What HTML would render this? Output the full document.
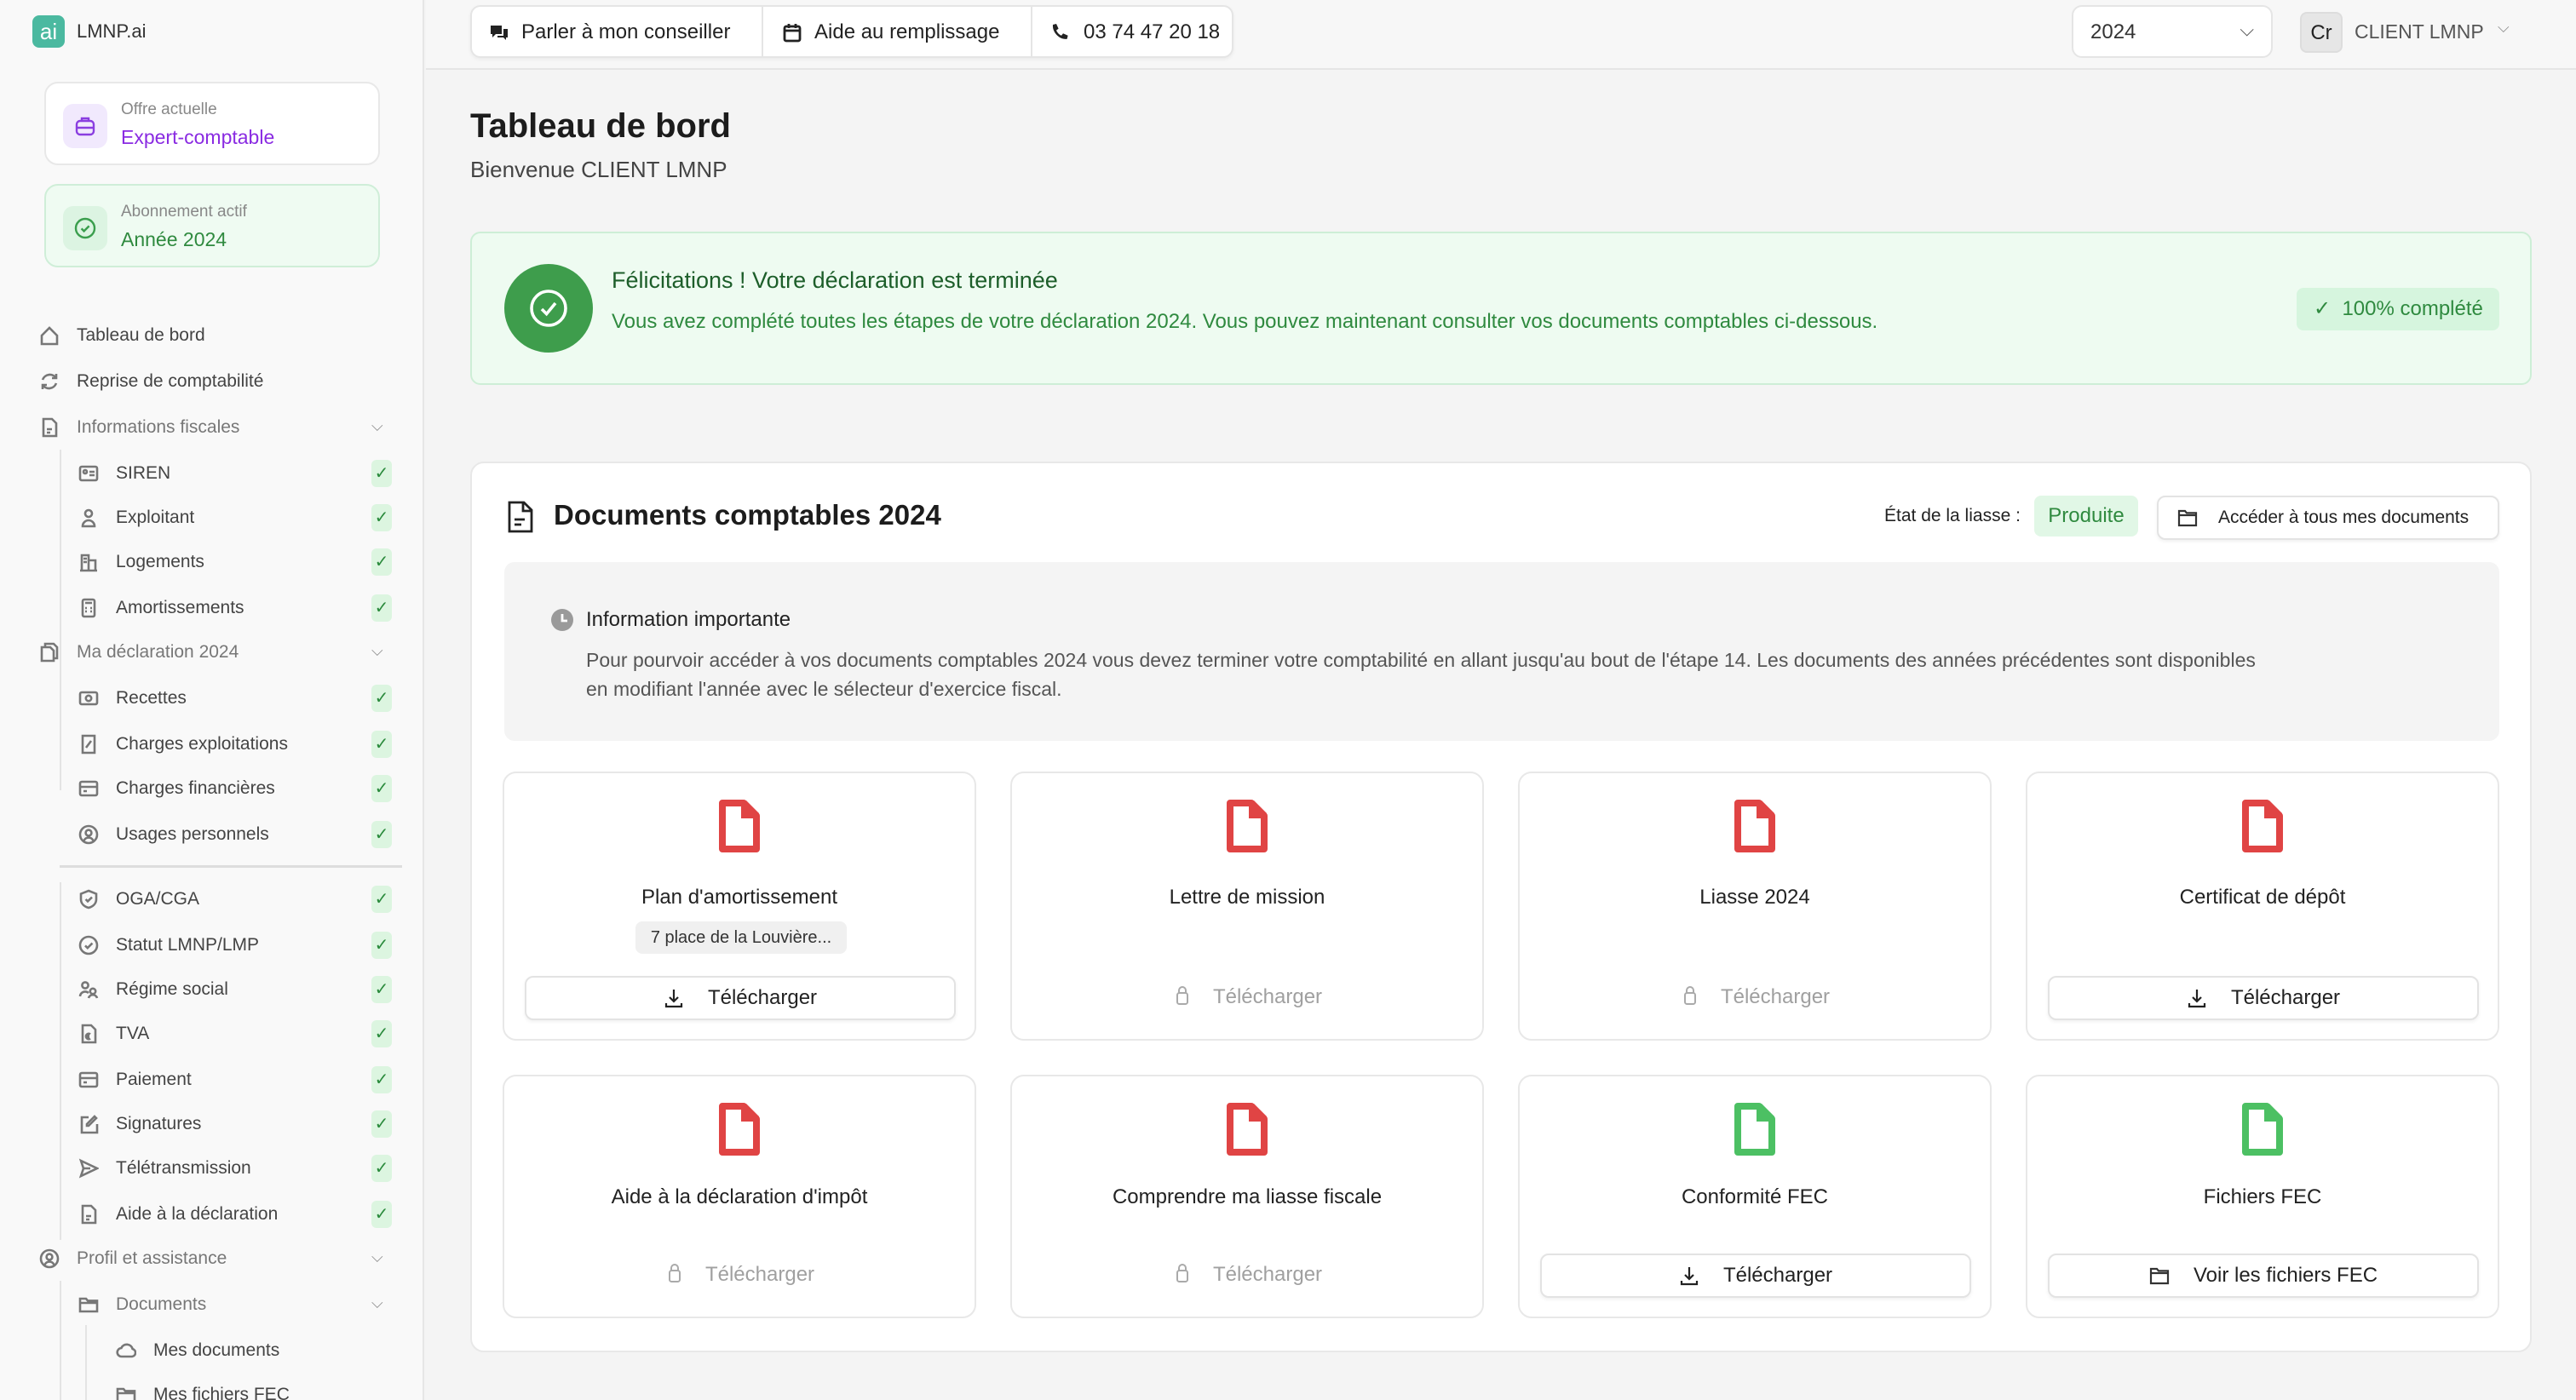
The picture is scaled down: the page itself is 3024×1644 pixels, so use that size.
<!DOCTYPE html>
<html><head><meta charset="utf-8"><style>
*{box-sizing:border-box;margin:0;padding:0}
html,body{width:3024px;height:1644px;overflow:hidden;background:#f4f4f4}
#w{zoom:2;width:1512px;height:822px;position:relative;font-family:"Liberation Sans",sans-serif;color:#222;overflow:hidden;background:#f4f4f4}
.a{position:absolute}
#sb{left:0;top:0;width:249px;height:822px;background:#f9f9f9;border-right:1px solid #e6e6e6}
.it{position:absolute;font-size:10.5px;color:#444;display:flex;align-items:center;height:20px;white-space:nowrap}
.it svg{width:12px;height:12px;margin-right:10px;stroke:#777;fill:none;stroke-width:1.3}
.ck{position:absolute;left:218px;width:12px;height:16px;background:#dcf5e0;border-radius:3px;color:#2a8a3c;font-size:10px;text-align:center;line-height:16px}
.chev{position:absolute;left:218px;font-size:9px;color:#888}
.card{position:absolute;background:#fff;border:1px solid #e8e8e8;border-radius:8px}
.btn{position:absolute;background:#fff;border:1px solid #e3e3e3;border-radius:5px;box-shadow:0 1px 2px rgba(0,0,0,.06);display:flex;align-items:center;justify-content:center;font-size:12px;color:#222;white-space:nowrap}
.dc{position:absolute;width:278px;background:#fff;border:1px solid #e8e8e8;border-radius:8px}
.dc .ic{position:absolute;left:50%;margin-left:-14px}
.dc .t{position:absolute;left:0;right:0;text-align:center;font-size:12px;color:#222}
.lk{position:absolute;left:0;right:0;text-align:center;font-size:12px;color:#a0a0a0}
</style></head><body><div id="w">
<div class="a" id="sb">
 <div class="a" style="left:19px;top:9px;width:19px;height:19px;background:#4bb9a0;border-radius:4px;color:#fff;font-size:13px;text-align:center;line-height:19px">ai</div>
 <div class="a" style="left:45px;top:12px;font-size:11px;color:#333">LMNP.ai</div>
 <div class="card" style="left:26px;top:48px;width:197px;height:49px">
  <div class="a" style="left:10px;top:12px;width:26px;height:26px;background:#f1e9fd;border-radius:6px"></div>
  <svg class="a" style="left:16px;top:18px" width="14" height="14" viewBox="0 0 14 14" fill="none" stroke="#8a3ee0" stroke-width="1.2"><rect x="2" y="4" width="10" height="8" rx="2"/><path d="M5 4V2.5h4V4M2 8h10"/></svg>
  <div class="a" style="left:44px;top:10px;font-size:9.5px;color:#888">Offre actuelle</div>
  <div class="a" style="left:44px;top:25px;font-size:11.5px;color:#8a2be2">Expert-comptable</div>
 </div>
 <div class="card" style="left:26px;top:108px;width:197px;height:49px;background:#effbf2;border-color:#cfeed8">
  <div class="a" style="left:10px;top:12px;width:26px;height:26px;background:#dcf4e2;border-radius:6px"></div>
  <svg class="a" style="left:16px;top:18px" width="14" height="14" viewBox="0 0 14 14" fill="none" stroke="#3a9e4d" stroke-width="1.2"><circle cx="7" cy="7" r="5.5"/><path d="M4.8 7.2l1.5 1.5 3-3"/></svg>
  <div class="a" style="left:44px;top:10px;font-size:9.5px;color:#888">Abonnement actif</div>
  <div class="a" style="left:44px;top:25px;font-size:11.5px;color:#2f8a3f">Année 2024</div>
 </div>
 <div class="a" style="left:35px;top:264px;width:1px;height:200px;background:#e4e4e4"></div>
 <div class="a" style="left:35px;top:518px;width:1px;height:210px;background:#e4e4e4"></div>
 <div class="a" style="left:35px;top:752px;width:1px;height:80px;background:#e4e4e4"></div>
 <div class="a" style="left:50px;top:778px;width:1px;height:60px;background:#e4e4e4"></div>
 <div class="a" style="left:35px;top:508px;width:201px;height:1.5px;background:#ddd"></div>

 <div class="it" style="left:23px;top:187px"><svg viewBox="0 0 12 12"><path d="M1.5 6L6 1.5 10.5 6V11h-9z"/></svg>Tableau de bord</div>
 <div class="it" style="left:23px;top:214px"><svg viewBox="0 0 12 12"><path d="M10 4A4.5 4.5 0 0 0 2 5M2 8a4.5 4.5 0 0 0 8-1M10 1.5V4H7.5M2 10.5V8h2.5"/></svg>Reprise de comptabilité</div>
 <div class="it" style="left:23px;top:241px;color:#777"><svg viewBox="0 0 12 12"><path d="M2.5 1h5l2.5 2.5V11h-7.5zM4.5 7h3M4.5 9h2"/></svg>Informations fiscales</div><div class="chev" style="top:245px">⌵</div>
 <div class="it" style="left:46px;top:268px"><svg viewBox="0 0 12 12"><rect x="1" y="2" width="10" height="8" rx="1"/><path d="M6.5 5h3M6.5 7h3"/><circle cx="4" cy="5" r="1"/></svg>SIREN</div><div class="ck" style="top:270px">✓</div>
 <div class="it" style="left:46px;top:294px"><svg viewBox="0 0 12 12"><circle cx="6" cy="3.5" r="2"/><path d="M2.5 11a3.5 3.5 0 0 1 7 0z"/></svg>Exploitant</div><div class="ck" style="top:296px">✓</div>
 <div class="it" style="left:46px;top:320px"><svg viewBox="0 0 12 12"><path d="M1 11h10M2 11V2h4v9M6 5h4v6M3 4h2M3 6h2"/></svg>Logements</div><div class="ck" style="top:322px">✓</div>
 <div class="it" style="left:46px;top:347px"><svg viewBox="0 0 12 12"><rect x="2.5" y="1" width="7" height="10" rx="1"/><path d="M4 3h4M4 6h1M7 6h1M4 8h1M7 8h1"/></svg>Amortissements</div><div class="ck" style="top:349px">✓</div>
 <div class="it" style="left:23px;top:373px;color:#777"><svg viewBox="0 0 12 12"><path d="M3.5 3V1h5l2 2v6.5h-2M1.5 3h5l2 2v6h-7z"/></svg>Ma déclaration 2024</div><div class="chev" style="top:377px">⌵</div>
 <div class="it" style="left:46px;top:400px"><svg viewBox="0 0 12 12"><rect x="1" y="2.5" width="10" height="7" rx="1"/><circle cx="6" cy="6" r="1.6"/></svg>Recettes</div><div class="ck" style="top:402px">✓</div>
 <div class="it" style="left:46px;top:427px"><svg viewBox="0 0 12 12"><path d="M2.5 1h7v10h-7zM4.5 8l3-4"/></svg>Charges exploitations</div><div class="ck" style="top:429px">✓</div>
 <div class="it" style="left:46px;top:453px"><svg viewBox="0 0 12 12"><rect x="1" y="2" width="10" height="8" rx="1"/><path d="M1 5h10M3 7.5h2"/></svg>Charges financières</div><div class="ck" style="top:455px">✓</div>
 <div class="it" style="left:46px;top:480px"><svg viewBox="0 0 12 12"><circle cx="6" cy="6" r="5"/><circle cx="6" cy="5" r="1.7"/><path d="M3.3 9.5a3 3 0 0 1 5.4 0"/></svg>Usages personnels</div><div class="ck" style="top:482px">✓</div>
 <div class="it" style="left:46px;top:518px"><svg viewBox="0 0 12 12"><path d="M6 1l4.5 1.8V6c0 2.6-2 4.3-4.5 5-2.5-.7-4.5-2.4-4.5-5V2.8z"/><path d="M4.3 6l1.2 1.2L8 4.8"/></svg>OGA/CGA</div><div class="ck" style="top:520px">✓</div>
 <div class="it" style="left:46px;top:545px"><svg viewBox="0 0 12 12"><circle cx="6" cy="6" r="5"/><path d="M4 6.2l1.4 1.4L8.2 4.8"/></svg>Statut LMNP/LMP</div><div class="ck" style="top:547px">✓</div>
 <div class="it" style="left:46px;top:571px"><svg viewBox="0 0 12 12"><circle cx="4" cy="3.5" r="1.8"/><circle cx="8.5" cy="7" r="1.6"/><path d="M1 10a3 3 0 0 1 5-2M6 11a2.6 2.6 0 0 1 5 0"/></svg>Régime social</div><div class="ck" style="top:573px">✓</div>
 <div class="it" style="left:46px;top:597px"><svg viewBox="0 0 12 12"><path d="M2.5 1h5l2.5 2.5V11h-7.5zM7 6.2a1.6 1.6 0 1 0 0 2.6M4.5 7h2M4.5 8h2"/></svg>TVA</div><div class="ck" style="top:599px">✓</div>
 <div class="it" style="left:46px;top:624px"><svg viewBox="0 0 12 12"><rect x="1" y="2" width="10" height="8" rx="1"/><path d="M1 5h10M3 7.5h2"/></svg>Paiement</div><div class="ck" style="top:626px">✓</div>
 <div class="it" style="left:46px;top:650px"><svg viewBox="0 0 12 12"><path d="M6 2H2v9h9V6M9.5 1.5l1 1L6 7H5V6z"/></svg>Signatures</div><div class="ck" style="top:652px">✓</div>
 <div class="it" style="left:46px;top:676px"><svg viewBox="0 0 12 12"><path d="M1.5 1.5L11 6l-9.5 4.5L3 6zM3 6h4"/></svg>Télétransmission</div><div class="ck" style="top:678px">✓</div>
 <div class="it" style="left:46px;top:703px"><svg viewBox="0 0 12 12"><path d="M2.5 1h5l2.5 2.5V11h-7.5zM4.5 7h3M4.5 9h2"/></svg>Aide à la déclaration</div><div class="ck" style="top:705px">✓</div>
 <div class="it" style="left:23px;top:729px;color:#777"><svg viewBox="0 0 12 12"><circle cx="6" cy="6" r="5"/><circle cx="6" cy="5" r="1.7"/><path d="M3.3 9.5a3 3 0 0 1 5.4 0"/></svg>Profil et assistance</div><div class="chev" style="top:733px">⌵</div>
 <div class="it" style="left:46px;top:756px;color:#777"><svg viewBox="0 0 12 12"><path d="M1 2.5h3.5l1 1.2H11V10H1zM1 5h10"/></svg>Documents</div><div class="chev" style="top:760px">⌵</div>
 <div class="it" style="left:68px;top:783px"><svg viewBox="0 0 12 12"><path d="M3.5 9.5a2.5 2.5 0 0 1-.3-5A3.5 3.5 0 0 1 9.8 5a2.3 2.3 0 0 1-.3 4.5z"/></svg>Mes documents</div>
 <div class="it" style="left:68px;top:809px"><svg viewBox="0 0 12 12"><path d="M1 2.5h3.5l1 1.2H11V10H1zM1 5h10"/></svg>Mes fichiers FEC</div>
</div>

<!-- top bar -->
<div class="a" style="left:250px;top:0;width:1262px;height:41px;background:#f7f7f7;border-bottom:1px solid #e5e5e5"></div>
<div class="a" style="left:276px;top:3px;width:448px;height:31px;background:#fff;border:1px solid #e5e5e5;border-radius:6px;box-shadow:0 1px 2px rgba(0,0,0,.05);font-size:12px;color:#222;white-space:nowrap">
 <div class="a" style="left:10px;top:8px;display:flex;align-items:center"><svg width="12" height="12" viewBox="0 0 12 12" fill="#222"><path d="M1 2h6.5v5H4L2 9V7H1zM8.5 4H11v5h-1v1.5L8.5 9H5V8h3.5z"/></svg><span style="margin-left:7px">Parler à mon conseiller</span></div>
 <div class="a" style="left:170px;top:0;width:1px;height:29px;background:#e5e5e5"></div>
 <div class="a" style="left:182px;top:8px;display:flex;align-items:center"><svg width="12" height="12" viewBox="0 0 12 12" fill="none" stroke="#222" stroke-width="1.4"><rect x="1.5" y="2.5" width="9" height="8.5" rx="1"/><path d="M1.5 5h9M4 1v2.5M8 1v2.5"/></svg><span style="margin-left:7px">Aide au remplissage</span></div>
 <div class="a" style="left:328px;top:0;width:1px;height:29px;background:#e5e5e5"></div>
 <div class="a" style="left:339px;top:8px;display:flex;align-items:center"><svg width="12" height="12" viewBox="0 0 12 12" fill="#222"><path d="M2 1.5l2-.5 1.3 2.8-1.3 1c.6 1.4 1.7 2.5 3 3.1l1-1.3 2.8 1.3-.5 2C6 10.5 1.5 6 2 1.5z"/></svg><span style="margin-left:8px">03 74 47 20 18</span></div>
</div>
<div class="a" style="left:1216px;top:3px;width:118px;height:31px;background:#fff;border:1px solid #e5e5e5;border-radius:6px;font-size:12px;color:#333;padding:8px 0 0 10px">2024<span class="a" style="right:10px;top:7px;font-size:11px;color:#555">⌵</span></div>
<div class="a" style="left:1350px;top:7px;width:25px;height:24px;background:#e6e6e6;border:1px solid #ddd;border-radius:4px;font-size:12px;text-align:center;line-height:23px;color:#222">Cr</div>
<div class="a" style="left:1382px;top:12px;font-size:11.5px;color:#555">CLIENT LMNP</div>
<div class="a" style="left:1466px;top:11px;font-size:9px;color:#888">⌵</div>

<div class="a" style="left:276px;top:63px;font-size:20px;font-weight:bold;color:#1c1c1c">Tableau de bord</div>
<div class="a" style="left:276px;top:92px;font-size:13px;color:#444">Bienvenue CLIENT LMNP</div>

<div class="a" style="left:276px;top:136px;width:1210px;height:90px;background:#eefbf1;border:1px solid #cdeed6;border-radius:6px">
 <div class="a" style="left:19px;top:18px;width:52px;height:52px;border-radius:50%;background:#3e9d4c"></div>
 <svg class="a" style="left:32px;top:31px" width="26" height="26" viewBox="0 0 26 26" fill="none" stroke="#fff" stroke-width="1.8"><circle cx="13" cy="13" r="10"/><path d="M9 13.5l2.8 2.8L17 10"/></svg>
 <div class="a" style="left:82px;top:20px;font-size:13.5px;color:#1d5e2a">Félicitations ! Votre déclaration est terminée</div>
 <div class="a" style="left:82px;top:45px;font-size:12px;color:#2f8a3f;white-space:nowrap">Vous avez complété toutes les étapes de votre déclaration 2024. Vous pouvez maintenant consulter vos documents comptables ci-dessous.</div>
 <div class="a" style="left:1071px;top:32px;width:119px;height:25px;background:#d6f5de;border-radius:4px;font-size:12px;color:#2f8a3f;line-height:25px;padding-left:10px;white-space:nowrap">✓&nbsp; 100% complété</div>
</div>

<div class="a" style="left:276px;top:271px;width:1210px;height:523px;background:#fff;border:1px solid #e8e8e8;border-radius:8px">
 <svg class="a" style="left:20px;top:22px" width="17" height="19" viewBox="0 0 17 19" fill="none" stroke="#222" stroke-width="1.4"><path d="M2 1h8.5L15 5.5V18H2zM10 1v5h5M5 11h6M5 14h4"/></svg>
 <div class="a" style="left:48px;top:21px;font-size:16.5px;font-weight:bold;color:#1c1c1c">Documents comptables 2024</div>
 <div class="a" style="left:829px;top:25px;font-size:10.5px;color:#222">État de la liasse :</div>
 <div class="a" style="left:917px;top:19px;width:61px;height:24px;background:#e1f7e6;border-radius:4px;font-size:12px;color:#2f8a3f;text-align:center;line-height:24px">Produite</div>
 <div class="btn" style="left:989px;top:19px;width:201px;height:26px;font-size:10.5px;justify-content:flex-start;padding-left:11px"><svg width="12" height="11" viewBox="0 0 12 11" fill="none" stroke="#333" stroke-width="1.1"><path d="M1 1.5h3.5l1 1.2H11V10H1zM1 4h10"/></svg><span style="margin-left:12px">Accéder à tous mes documents</span></div>
 <div class="a" style="left:19px;top:58px;width:1171px;height:105px;background:#f4f4f4;border-radius:6px">
  <svg class="a" style="left:27px;top:27px" width="14" height="14" viewBox="0 0 14 14"><circle cx="7" cy="7" r="6.5" fill="#9a9a9a"/><path d="M7 3.5V7.5h3" stroke="#fff" stroke-width="1.4" fill="none"/></svg>
  <div class="a" style="left:48px;top:27px;font-size:12px;color:#222">Information importante</div>
  <div class="a" style="left:48px;top:49px;width:1080px;font-size:11.5px;line-height:17px;color:#555">Pour pourvoir accéder à vos documents comptables 2024 vous devez terminer votre comptabilité en allant jusqu'au bout de l'étape 14. Les documents des années précédentes sont disponibles<br>en modifiant l'année avec le sélecteur d'exercice fiscal.</div>
 </div>
</div>

<svg width="0" height="0" style="position:absolute"><defs>
<symbol id="fr" viewBox="0 0 28 32"><path d="M4 2.5h12.5L24 10v19.5H4z" fill="none" stroke="#e04444" stroke-width="4" stroke-linejoin="round"/><path d="M15 1h3l7.5 7.5v3H15z" fill="#e04444"/></symbol>
<symbol id="fg" viewBox="0 0 28 32"><path d="M4 2.5h12.5L24 10v19.5H4z" fill="none" stroke="#4cc063" stroke-width="4" stroke-linejoin="round"/><path d="M15 1h3l7.5 7.5v3H15z" fill="#4cc063"/></symbol>
<symbol id="dl" viewBox="0 0 12 12"><path d="M6 1v7M3.5 5.5L6 8l2.5-2.5M1.5 9v2h9V9" fill="none" stroke="#222" stroke-width="1.1"/></symbol>
<symbol id="lk" viewBox="0 0 12 12"><rect x="3" y="5" width="6" height="6.5" rx="1.2" fill="none" stroke="#aaa" stroke-width="1"/><path d="M4 5V3.5a2 2 0 0 1 4 0V5" fill="none" stroke="#aaa" stroke-width="1"/></symbol>
</defs></svg>

<!-- row 1 -->
<div class="dc" style="left:295px;top:453px;height:158px"><svg class="ic" style="top:15px" width="28" height="32"><use href="#fr"/></svg><div class="t" style="top:66px">Plan d'amortissement</div>
 <div class="a" style="left:77px;top:87px;width:124px;height:19px;background:#f0f0f0;border-radius:4px;font-size:10px;text-align:center;line-height:19px;color:#333">7 place de la Louvière...</div>
 <div class="btn" style="left:12px;top:119px;width:253px;height:26px"><svg width="12" height="12"><use href="#dl"/></svg><span style="margin-left:14px">Télécharger</span></div></div>
<div class="dc" style="left:593px;top:453px;height:158px"><svg class="ic" style="top:15px" width="28" height="32"><use href="#fr"/></svg><div class="t" style="top:66px">Lettre de mission</div>
 <div class="lk" style="top:124px"><svg width="12" height="12" style="vertical-align:-1px;margin-right:12px"><use href="#lk"/></svg>Télécharger</div></div>
<div class="dc" style="left:891px;top:453px;height:158px"><svg class="ic" style="top:15px" width="28" height="32"><use href="#fr"/></svg><div class="t" style="top:66px">Liasse 2024</div>
 <div class="lk" style="top:124px"><svg width="12" height="12" style="vertical-align:-1px;margin-right:12px"><use href="#lk"/></svg>Télécharger</div></div>
<div class="dc" style="left:1189px;top:453px;height:158px"><svg class="ic" style="top:15px" width="28" height="32"><use href="#fr"/></svg><div class="t" style="top:66px">Certificat de dépôt</div>
 <div class="btn" style="left:12px;top:119px;width:253px;height:26px"><svg width="12" height="12"><use href="#dl"/></svg><span style="margin-left:14px">Télécharger</span></div></div>
<!-- row 2 -->
<div class="dc" style="left:295px;top:631px;height:143px"><svg class="ic" style="top:15px" width="28" height="32"><use href="#fr"/></svg><div class="t" style="top:64px">Aide à la déclaration d'impôt</div>
 <div class="lk" style="top:109px"><svg width="12" height="12" style="vertical-align:-1px;margin-right:12px"><use href="#lk"/></svg>Télécharger</div></div>
<div class="dc" style="left:593px;top:631px;height:143px"><svg class="ic" style="top:15px" width="28" height="32"><use href="#fr"/></svg><div class="t" style="top:64px">Comprendre ma liasse fiscale</div>
 <div class="lk" style="top:109px"><svg width="12" height="12" style="vertical-align:-1px;margin-right:12px"><use href="#lk"/></svg>Télécharger</div></div>
<div class="dc" style="left:891px;top:631px;height:143px"><svg class="ic" style="top:15px" width="28" height="32"><use href="#fg"/></svg><div class="t" style="top:64px">Conformité FEC</div>
 <div class="btn" style="left:12px;top:104px;width:253px;height:26px"><svg width="12" height="12"><use href="#dl"/></svg><span style="margin-left:14px">Télécharger</span></div></div>
<div class="dc" style="left:1189px;top:631px;height:143px"><svg class="ic" style="top:15px" width="28" height="32"><use href="#fg"/></svg><div class="t" style="top:64px">Fichiers FEC</div>
 <div class="btn" style="left:12px;top:104px;width:253px;height:26px"><svg width="12" height="11" viewBox="0 0 12 11" fill="none" stroke="#333" stroke-width="1.1"><path d="M1 1.5h3.5l1 1.2H11V10H1zM1 4h10"/></svg><span style="margin-left:14px">Voir les fichiers FEC</span></div></div>
</div></body></html>
